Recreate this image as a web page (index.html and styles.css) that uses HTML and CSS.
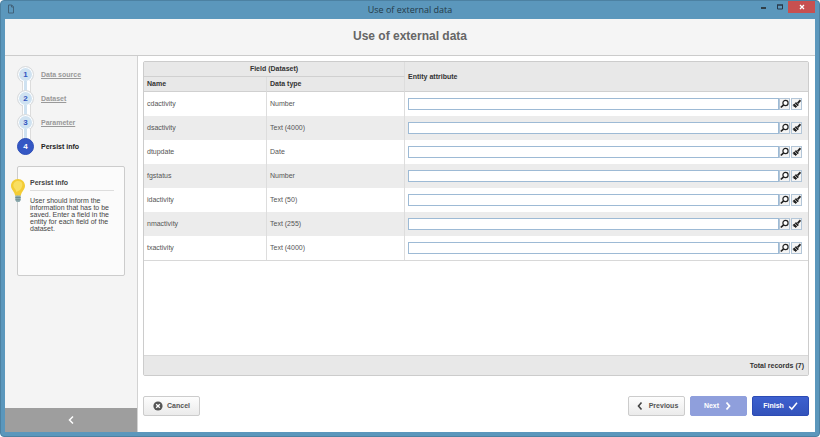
FILE: index.html
```html
<!DOCTYPE html>
<html lang="en">
<head>
    <meta charset="UTF-8">
    <meta name="viewport" content="width=device-width, initial-scale=1.0">
    <title>Use of external data</title>
    <link rel="stylesheet" href="styles.css">
</head>
<body>

    <!-- Shared icons -->
    <svg class="sprite" aria-hidden="true">
        <symbol id="icon-search" viewBox="0 0 9 10">
            <circle cx="5.500" cy="4" r="2.600" fill="#fff" stroke="#222" stroke-width="1.200"/>
            <path d="M3.600 5.900L.8 8.500" stroke="#222" stroke-width="1.700"/>
        </symbol>
        <symbol id="icon-clear" viewBox="0 0 9 10">
            <path d="M8.500 1.200L5.600 4.300" stroke="#222" stroke-width="1.900"/>
            <path d="M4 3l2.900 3-1.200 1.200L2.800 4.200z" fill="#222"/>
            <path d="M2.400 4.500L.4 6.200l1 .4.3 1.100 1.100.2.600 1.200L5.200 7.400z" fill="#222"/>
        </symbol>
    </svg>

    <div class="window">
        <div class="titlebar">
            <svg class="doc-icon" viewBox="0 0 8 10"><path d="M1.500 1h3.300L6.500 2.800V9h-5zM4.500 1v2h2" fill="none" stroke="#42627a"/></svg>
            <span class="titlebar-text">Use of external data</span>
            <div class="window-buttons">
                <button type="button" class="win-btn" aria-label="Minimize"><svg viewBox="0 0 16 12"><path d="M5 7h5" stroke="#222" stroke-width="1.500"/></svg></button>
                <button type="button" class="win-btn" aria-label="Maximize"><svg viewBox="0 0 16 12"><path d="M5.500 4v4h5V4" fill="none" stroke="#28394a"/><path d="M5 4h6" stroke="#28394a" stroke-width="1.500"/></svg></button>
                <button type="button" class="win-btn win-close" aria-label="Close"><svg viewBox="0 0 16 12"><path d="M6 4l4 4M10 4L6 8" stroke="#fff" stroke-width="1.300"/></svg></button>
            </div>
        </div>

        <header class="header">
            <h1>Use of external data</h1>
        </header>

        <div class="content">
            <aside class="sidebar">
                <ol class="steps">
                    <li class="step"><span class="step-number">1</span><a href="#">Data source</a></li>
                    <li class="step"><span class="step-number">2</span><a href="#">Dataset</a></li>
                    <li class="step"><span class="step-number">3</span><a href="#">Parameter</a></li>
                    <li class="step step-current"><span class="step-number">4</span><span>Persist info</span></li>
                </ol>

                <div class="tip">
                    <svg class="bulb" viewBox="0 0 14 24">
                        <path d="M7 0C3 0 0 3 0 6.800c0 4 3.500 5.500 4.200 10h5.600c.7-4.500 4.200-6 4.200-10C14 3 11 0 7 0z" fill="#f3cc35"/>
                        <path d="M7 2C4.500 2 2.300 4 2.300 6.500S5 10 5.300 13L9 11c3-3 4-9-2-9z" fill="#f9df62"/>
                        <path d="M4.300 16.500h5.400V21L8.500 23h-3l-1.200-2z" fill="#8eacb0"/>
                        <path d="M4.300 18.500h5.400M4.500 20.800h5" stroke="#64858c" stroke-width=".8"/>
                    </svg>
                    <h2>Persist info</h2>
                    <p>User should inform the information that has to be saved. Enter a field in the entity for each field of the dataset.</p>
                </div>

                <button type="button" class="collapse" aria-label="Collapse"><svg viewBox="0 0 8 10"><path d="M6 1.500L2.500 5 6 8.500" fill="none" stroke="#fff" stroke-width="1.500"/></svg></button>
            </aside>

            <main class="main">
                <div class="grid">
                    <table>
                        <colgroup>
                            <col class="col-name">
                            <col class="col-type">
                            <col>
                        </colgroup>
                        <thead>
                            <tr>
                                <th colspan="2" class="group">Field (Dataset)</th>
                                <th rowspan="2">Entity attribute</th>
                            </tr>
                            <tr>
                                <th>Name</th>
                                <th>Data type</th>
                            </tr>
                        </thead>
                        <tbody>
                            <tr>
                                <td>cdactivity</td>
                                <td>Number</td>
                                <td><div class="field"><input type="text" aria-label="Attribute for cdactivity"><button type="button" aria-label="Search"><svg><use href="#icon-search"/></svg></button><button type="button" aria-label="Clear"><svg><use href="#icon-clear"/></svg></button></div></td>
                            </tr>
                            <tr>
                                <td>dsactivity</td>
                                <td>Text (4000)</td>
                                <td><div class="field"><input type="text" aria-label="Attribute for dsactivity"><button type="button" aria-label="Search"><svg><use href="#icon-search"/></svg></button><button type="button" aria-label="Clear"><svg><use href="#icon-clear"/></svg></button></div></td>
                            </tr>
                            <tr>
                                <td>dtupdate</td>
                                <td>Date</td>
                                <td><div class="field"><input type="text" aria-label="Attribute for dtupdate"><button type="button" aria-label="Search"><svg><use href="#icon-search"/></svg></button><button type="button" aria-label="Clear"><svg><use href="#icon-clear"/></svg></button></div></td>
                            </tr>
                            <tr>
                                <td>fgstatus</td>
                                <td>Number</td>
                                <td><div class="field"><input type="text" aria-label="Attribute for fgstatus"><button type="button" aria-label="Search"><svg><use href="#icon-search"/></svg></button><button type="button" aria-label="Clear"><svg><use href="#icon-clear"/></svg></button></div></td>
                            </tr>
                            <tr>
                                <td>idactivity</td>
                                <td>Text (50)</td>
                                <td><div class="field"><input type="text" aria-label="Attribute for idactivity"><button type="button" aria-label="Search"><svg><use href="#icon-search"/></svg></button><button type="button" aria-label="Clear"><svg><use href="#icon-clear"/></svg></button></div></td>
                            </tr>
                            <tr>
                                <td>nmactivity</td>
                                <td>Text (255)</td>
                                <td><div class="field"><input type="text" aria-label="Attribute for nmactivity"><button type="button" aria-label="Search"><svg><use href="#icon-search"/></svg></button><button type="button" aria-label="Clear"><svg><use href="#icon-clear"/></svg></button></div></td>
                            </tr>
                            <tr>
                                <td>txactivity</td>
                                <td>Text (4000)</td>
                                <td><div class="field"><input type="text" aria-label="Attribute for txactivity"><button type="button" aria-label="Search"><svg><use href="#icon-search"/></svg></button><button type="button" aria-label="Clear"><svg><use href="#icon-clear"/></svg></button></div></td>
                            </tr>
                        </tbody>
                    </table>
                    <div class="grid-footer">Total records (7)</div>
                </div>

                <div class="actions">
                    <button type="button" class="btn btn-cancel">
                        <svg viewBox="0 0 10 10"><circle cx="5" cy="5" r="4.600" fill="#555"/><path d="M3.200 3.200l3.600 3.600M6.800 3.200L3.200 6.800" stroke="#fff" stroke-width="1.300"/></svg>
                        Cancel
                    </button>
                    <button type="button" class="btn">
                        <svg viewBox="0 0 10 10"><path d="M6.500 1.500L3.500 5l3 3.500" fill="none" stroke="#444" stroke-width="1.600"/></svg>
                        Previous
                    </button>
                    <button type="button" class="btn btn-next">
                        Next
                        <svg viewBox="0 0 10 10"><path d="M3.500 1.500l3 3.500-3 3.500" fill="none" stroke="#fff" stroke-width="1.800"/></svg>
                    </button>
                    <button type="button" class="btn btn-finish">
                        Finish
                        <svg viewBox="0 0 10 10"><path d="M1.200 5.500l2.600 2.600L9 1.800" fill="none" stroke="#fff" stroke-width="1.500"/></svg>
                    </button>
                </div>
            </main>
        </div>
    </div>

</body>
</html>
```
FILE: styles.css
```css
* {
    box-sizing: border-box;
}
body {
    margin: 0;
    background: #fff;
    font-family: "Liberation Sans", Arial, sans-serif;
    font-size: 7px;
    line-height: 8px;
    color: #555;
}
button {
    font: inherit;
    padding: 0;
    cursor: pointer;
}
svg {
    display: block;
    flex: none;
}
.sprite {
    display: none;
}

/* Window frame */
.window {
    display: flex;
    flex-direction: column;
    min-height: 100vh;
    padding: 0 4px 4px;
    background: #5b97bc;
    border: 1px solid #4c81a2;
    border-radius: 4px;
}
.titlebar {
    display: flex;
    justify-content: center;
    position: relative;
    height: 18px;
}
.titlebar-text {
    font-family: "Open Sans", sans-serif;
    font-size: 9px;
    line-height: 18px;
    color: #243a48;
}
.doc-icon {
    position: absolute;
    left: 2px;
    top: 3px;
    width: 8px;
    height: 10px;
}
.window-buttons {
    position: absolute;
    right: 0;
    top: 0;
    display: flex;
}
.win-btn {
    width: 16px;
    height: 12px;
    border: 0;
    background: none;
}
.win-btn svg {
    width: 16px;
    height: 12px;
    margin: 0 auto;
}
.win-close {
    width: 27px;
    background: #c75050;
}

/* Page header */
.header {
    height: 37px;
    background: #f5f5f5;
    border-bottom: 1px solid #ccc;
    text-align: center;
}
.header h1 {
    margin: 0;
    font-size: 12px;
    line-height: 35px;
    color: #666;
}
.content {
    flex: 1;
    display: flex;
    background: #fff;
}

/* Sidebar */
.sidebar {
    flex: none;
    display: flex;
    flex-direction: column;
    width: 133px;
    background: #f4f4f4;
    border-right: 1px solid #d2d2d2;
}
.steps {
    list-style: none;
    margin: 0;
    padding: 10px 12px 0;
}
.step {
    display: flex;
    align-items: center;
    gap: 7px;
    position: relative;
    height: 17px;
    margin-bottom: 7px;
    font-weight: bold;
    color: #222;
}
.step a {
    color: #999;
}
.step-number {
    width: 17px;
    height: 17px;
    border: 1px solid #dcdcdc;
    border-radius: 50%;
    background: #cfe2f1;
    box-shadow: inset 0 0 0 1px #fff;
    font-size: 8px;
    line-height: 15px;
    text-align: center;
    color: #3355c0;
}
/* Line down to the next step */
.step:not(:last-child)::after {
    content: "";
    position: absolute;
    left: 5px;
    top: 15px;
    width: 7px;
    height: 11px;
    border: solid #dcdcdc;
    border-width: 0 1px;
    background: linear-gradient(to right, #fff 1px, #cfe2f1 1px, #cfe2f1 4px, #fff 4px);
}
.step-current .step-number {
    position: relative;
    z-index: 1;
    border-color: #2d4eb8;
    background: #3457c4;
    box-shadow: none;
    color: #fff;
}
.tip {
    position: relative;
    min-height: 110px;
    margin: 4px 12px 12px;
    padding: 12px 10px 12px 12px;
    border: 1px solid #ccc;
    border-radius: 2px;
    background: #fbfbfb;
}
.bulb {
    position: absolute;
    left: -7px;
    top: 12px;
    width: 14px;
    height: 24px;
}
.tip h2 {
    margin: 0 0 6px;
    padding-bottom: 3px;
    border-bottom: 1px solid #ddd;
    font-size: 7px;
    line-height: 8px;
    color: #444;
}
.tip p {
    margin: 0;
    line-height: 7px;
    color: #444;
}
.collapse {
    display: flex;
    align-items: center;
    justify-content: center;
    height: 24px;
    margin-top: auto;
    border: 0;
    background: #9e9e9e;
}
.collapse svg {
    width: 8px;
    height: 10px;
}

/* Fields grid */
.main {
    flex: 1;
    display: flex;
    flex-direction: column;
    min-width: 0;
    padding: 5px 6px 16px 5px;
}
.grid {
    flex: 1;
    display: flex;
    flex-direction: column;
    border: 1px solid #ccc;
    border-radius: 2px;
}
table {
    width: 100%;
    table-layout: fixed;
    border-collapse: separate;
    border-spacing: 0;
    border-bottom: 1px solid #d8d8d8;
}
.col-name {
    width: 123px;
}
.col-type {
    width: 138px;
}
th,
td {
    padding: 0 3px;
    border-right: 1px solid #ddd;
    text-align: left;
}
th:last-child,
td:last-child {
    padding-right: 6px;
}
tr > :nth-child(3),
th[rowspan] {
    border-right: 0;
}
th {
    height: 15px;
    background: #e8e8e8;
    border-bottom: 1px solid #d0d0d0;
    color: #333;
}
th.group {
    text-align: center;
}
td {
    height: 24px;
}
tbody tr:nth-child(even) {
    background: #ececec;
}
.field {
    display: flex;
}
.field input {
    flex: 1;
    min-width: 0;
    height: 12px;
    padding: 0 2px;
    border: 1px solid #9dbad5;
    background: #fff;
    font: inherit;
}
.field button {
    width: 11px;
    height: 12px;
    border: 1px solid #b3c6d8;
    background: #f4f4f4;
}
.field button + button {
    margin-left: 1px;
}
.field svg {
    width: 9px;
    height: 10px;
}
.grid-footer {
    height: 20px;
    margin-top: auto;
    padding-right: 4px;
    border-top: 1px solid #d8d8d8;
    background: #e8e8e8;
    font-weight: bold;
    line-height: 19px;
    text-align: right;
    color: #333;
}

/* Wizard buttons */
.actions {
    display: flex;
    gap: 5px;
    margin-top: 20px;
}
.btn {
    display: flex;
    align-items: center;
    justify-content: center;
    gap: 4px;
    width: 57px;
    height: 20px;
    border: 1px solid #ccc;
    border-radius: 2px;
    background: linear-gradient(#fdfdfd, #ebebeb);
    font-weight: bold;
    color: #555;
}
.btn svg {
    width: 10px;
    height: 10px;
}
.btn-cancel {
    margin-right: auto;
}
.btn-next {
    border-color: #8f9fdc;
    background: #8f9fdc;
    color: #fff;
}
.btn-finish {
    border-color: #2c4bb5;
    background: linear-gradient(#3d60cf, #3353bb);
    color: #fff;
}
```
